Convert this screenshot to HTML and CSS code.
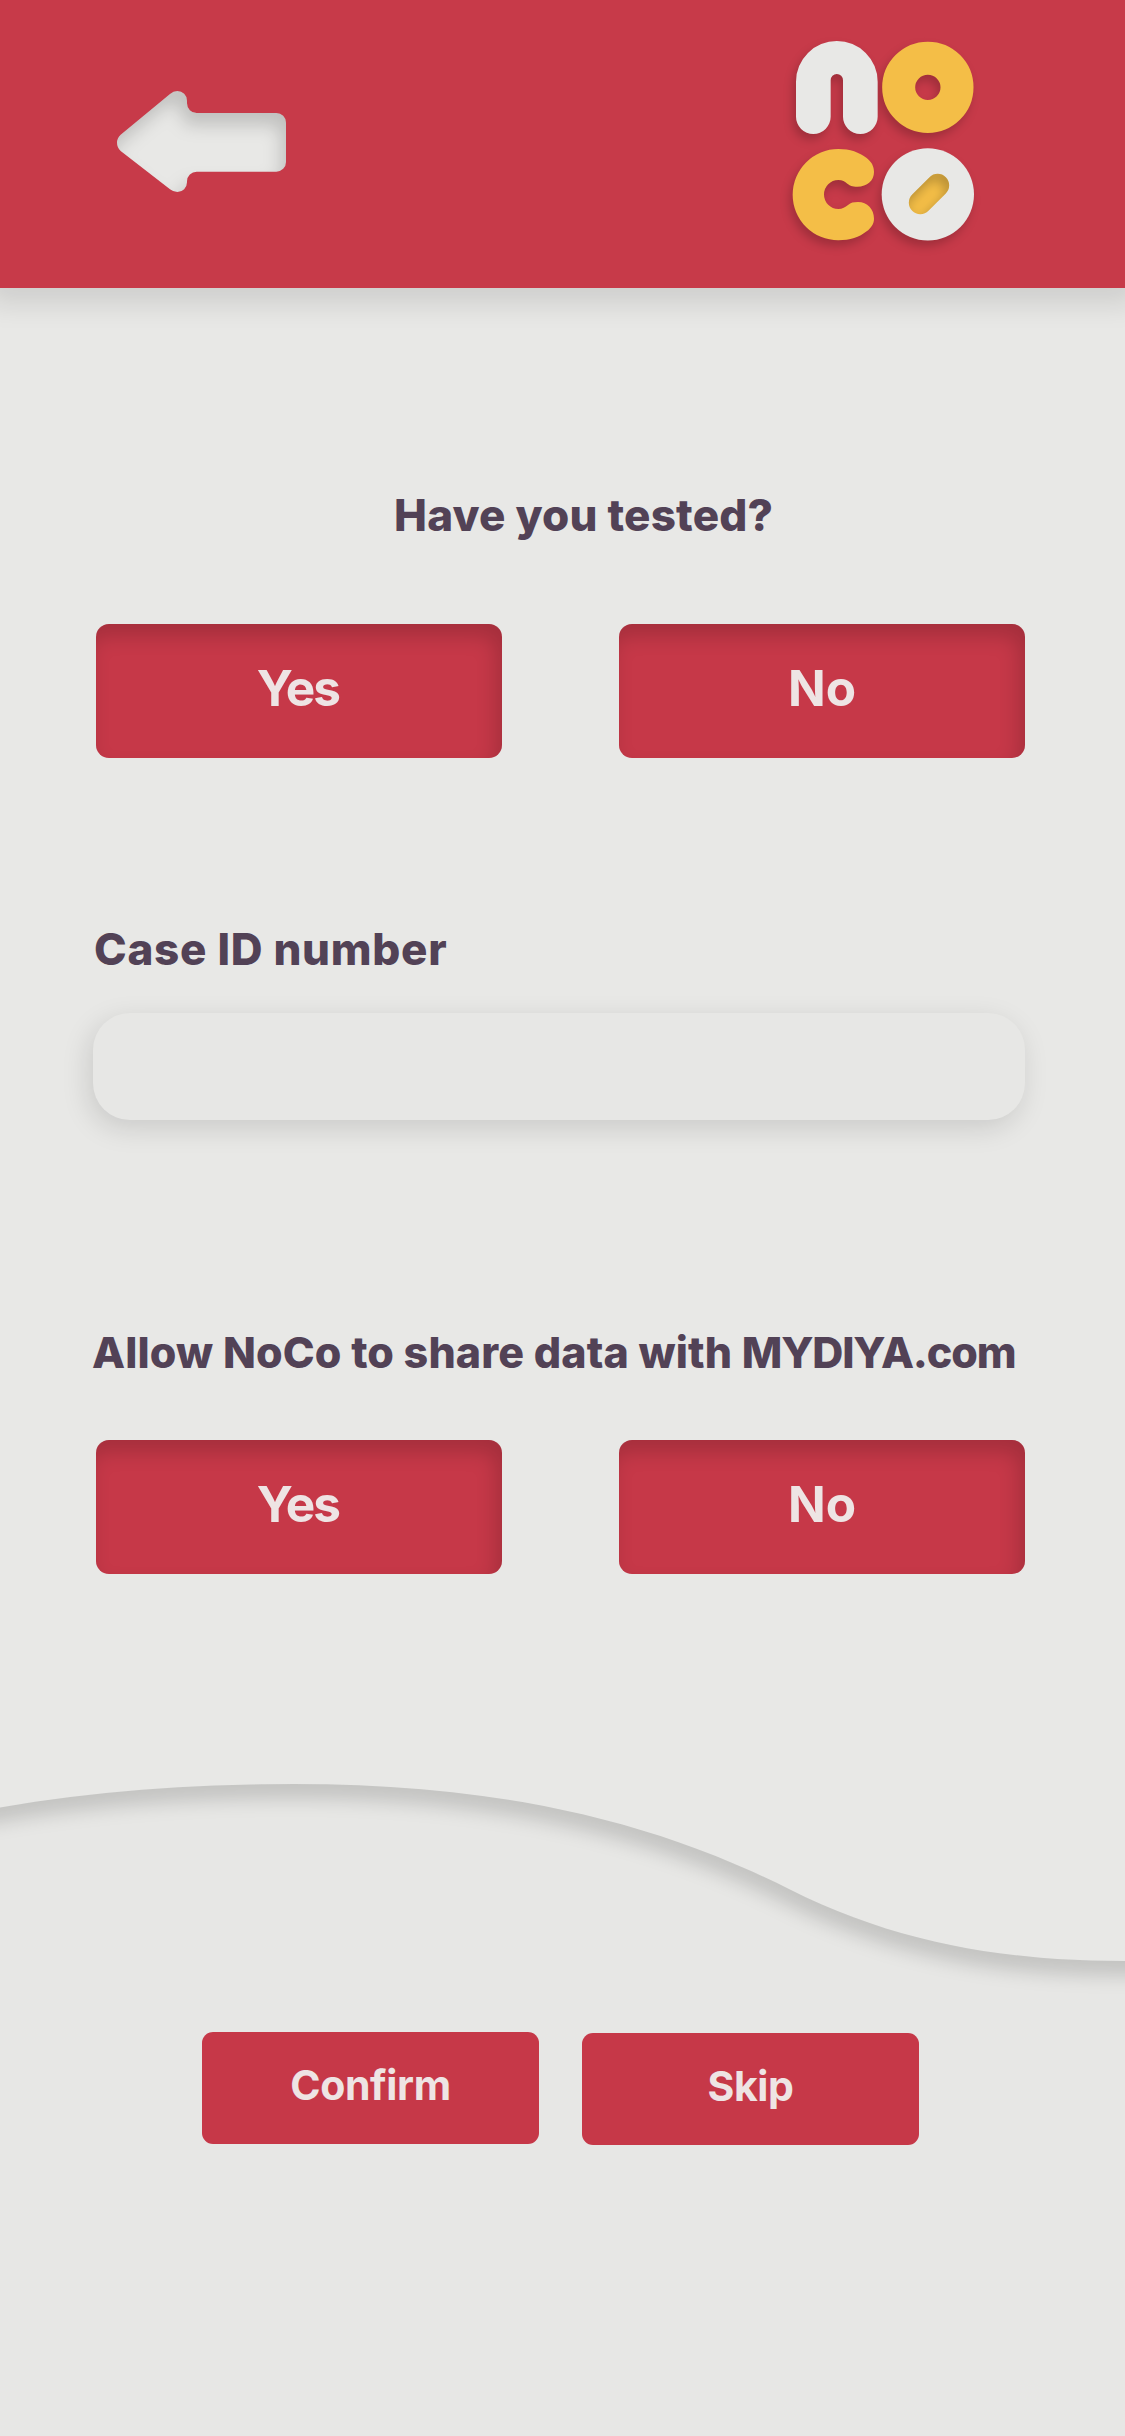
FILE: index.html
```html
<!DOCTYPE html>
<html lang="en">
<head>
<meta charset="utf-8">
<title>NoCo</title>
<link rel="stylesheet" href="styles.css">
</head>
<body>
<header class="header">
  <a class="back" href="#" aria-label="Back">
    <svg class="back-icon" viewBox="0 0 660 420">
      <defs>
        <filter id="inset" x="-20%" y="-20%" width="140%" height="140%" color-interpolation-filters="sRGB">
          <feComponentTransfer in="SourceAlpha" result="inv"><feFuncA type="table" tableValues="1 0"/></feComponentTransfer>
          <feOffset in="inv" dx="-16" dy="36"/>
          <feGaussianBlur stdDeviation="25" result="blur"/>
          <feFlood flood-color="#000" flood-opacity="0.17"/>
          <feComposite in2="blur" operator="in"/>
          <feComposite in2="SourceAlpha" operator="in" result="shade"/>
          <feMerge><feMergeNode in="SourceGraphic"/><feMergeNode in="shade"/></feMerge>
        </filter>
      </defs>
      <path filter="url(#inset)" fill="#e8e8e6" d="M92 194L240 72Q250 63 262 63A29 29 0 0 1 291 92V100A29 29 0 0 0 320 129H559A29 29 0 0 1 588 158V276A29 29 0 0 1 559 305H320A29 29 0 0 0 291 334V337A29 29 0 0 1 262 366Q250 366 240 358L92 243Q81 232 81 218Q81 204 92 194Z"/>
    </svg>
  </a>
  <svg class="logo" viewBox="0 0 690 720" role="img" aria-label="NoCo">
    <defs>
      <filter id="pill" x="-20%" y="-20%" width="140%" height="140%" color-interpolation-filters="sRGB">
        <feComponentTransfer in="SourceAlpha" result="inv"><feFuncA type="table" tableValues="1 0"/></feComponentTransfer>
        <feOffset in="inv" dx="-9" dy="18"/>
        <feGaussianBlur stdDeviation="17" result="blur"/>
        <feFlood flood-color="#000" flood-opacity="0.28"/>
        <feComposite in2="blur" operator="in"/>
        <feComposite in2="SourceAlpha" operator="in" result="shade"/>
        <feMerge><feMergeNode in="SourceGraphic"/><feMergeNode in="shade"/></feMerge>
      </filter>
      <filter id="drop" x="-10%" y="-10%" width="120%" height="120%" color-interpolation-filters="sRGB">
        <feDropShadow dx="-9" dy="17" stdDeviation="15" flood-color="#000" flood-opacity="0.2"/>
      </filter>
    </defs>
    <g filter="url(#drop)">
      <path fill="#e8e8e6" d="M78 185A122.5 122 0 0 1 323 185V290A52 52 0 0 1 219 290V181A18.5 19 0 0 0 182 181V290A52 52 0 0 1 78 290Z"/>
      <circle cx="473.500" cy="202" r="87.500" fill="none" stroke="#f4be47" stroke-width="99"/>
      <path fill="#f4be47" d="M205 387C240 387 268 397 290 414C304 425 312 438 312 456C312 482 292 500 262 500C246 500 239 496 232 491C225 485 217 480 205 480A43 43.500 0 0 0 205 567C217 567 226 561 234 555C243 548 250 546 264 546C292 546 312 568 312 596C312 612 303 624 290 634C268 652 240 661 205 661A137 137 0 0 1 205 387Z"/>
      <circle cx="473.500" cy="523" r="138.500" fill="#e8e8e6"/>
    </g>
    <path filter="url(#pill)" fill="#f4be47" d="M478.600 471.600A34.500 34.500 0 0 1 527.400 520.400L475.400 572.400A34.500 34.500 0 0 1 426.600 523.600Z"/>
  </svg>
</header>
<main class="form">
  <h2 class="question question-center">Have you tested?</h2>
  <div class="choices">
    <button class="choice"><span class="yes">Yes</span></button>
    <button class="choice">No</button>
  </div>
  <label class="question question-case" for="case">Case ID number</label>
  <input class="field" id="case" type="text">
  <h2 class="question question-share">Allow NoCo to share data with <span class="site">MYDIYA.com</span></h2>
  <div class="choices">
    <button class="choice"><span class="yes">Yes</span></button>
    <button class="choice">No</button>
  </div>
</main>
<footer class="footer">
  <svg class="wave" viewBox="0 0 1125 280">
    <path class="wave-edge" d="M-80 -60V82L0 67.500C95 51 194 44 294 44C484 44 642 75 789 149C900 205 1010 221 1125 221H1205V-60Z"/>
  </svg>
  <div class="actions">
    <button class="action">Confirm</button>
    <button class="action action-skip">Skip</button>
  </div>
</footer>
</body>
</html>
```
FILE: styles.css
```css
* {
  box-sizing: border-box;
}

body {
  margin: 0;
  width: 1125px;
  height: 2436px;
  display: flex;
  flex-direction: column;
  overflow: hidden;
  background: #e8e8e6;
  font-family: Inter, "Open Sans", sans-serif;
}

button {
  border: 0;
  font-family: inherit;
  font-weight: 700;
  color: #eee4e4;
  background: #c63848;
}

.header {
  display: flex;
  justify-content: space-between;
  align-items: flex-start;
  height: 288px;
  padding: 20px 125px 0 90px;
  background: #c73a49;
  box-shadow: 0 4px 26px 12px rgba(0, 0, 0, 0.11);
}

.back {
  margin-top: 50px;
}

.back-icon {
  display: block;
  width: 220px;
  height: 140px;
}

.logo {
  width: 230px;
  height: 240px;
}

.form {
  display: flex;
  flex-direction: column;
  height: 1452px;
  padding: 197px 100px 0 93px;
}

.question {
  margin: 0;
  font-size: 44px;
  line-height: 60px;
  font-weight: 800;
  color: #524256;
  white-space: nowrap;
}

.question-center {
  padding-left: 301px;
  letter-spacing: 0.2px;
}

.question-case {
  margin-top: 161px;
  padding-left: 1px;
  letter-spacing: 0.7px;
}

.question-share {
  margin-top: 202px;
  margin-left: -1px;
  font-size: 43px;
  letter-spacing: 0.14px;
}

.site {
  letter-spacing: -1.2px;
}

.choices {
  display: flex;
  justify-content: space-between;
  margin-top: 79px;
  padding-left: 3px;
}

.question-share + .choices {
  margin-top: 58px;
}

.choice {
  width: 406px;
  height: 134px;
  padding: 0 0 6px;
  border-radius: 13px;
  font-size: 49.5px;
  box-shadow: inset -6px 12px 20px rgba(0, 0, 0, 0.17);
}

.yes {
  margin-left: -2px;
  letter-spacing: -1.8px;
}

.field {
  width: 932px;
  height: 107px;
  margin-top: 34px;
  padding: 0 36px;
  border: 0;
  border-radius: 37px;
  background: #e7e7e5;
  box-shadow: -4px 8px 28px rgba(0, 0, 0, 0.13);
  font: inherit;
  font-size: 40px;
}

.footer {
  flex: 1;
  background: #e7e7e5;
}

.wave {
  display: block;
  width: 1125px;
  height: 280px;
  overflow: hidden;
}

.wave-edge {
  fill: #e8e8e6;
  filter: drop-shadow(-3px 15px 9px rgba(0, 0, 0, 0.15));
}

.actions {
  display: flex;
  gap: 43px;
  padding: 12px 0 0 202px;
}

.action {
  width: 337px;
  height: 112px;
  padding: 0 0 6px;
  border-radius: 11px;
  font-size: 41px;
  letter-spacing: -0.4px;
}

.action-skip {
  margin-top: 1px;
}
```
